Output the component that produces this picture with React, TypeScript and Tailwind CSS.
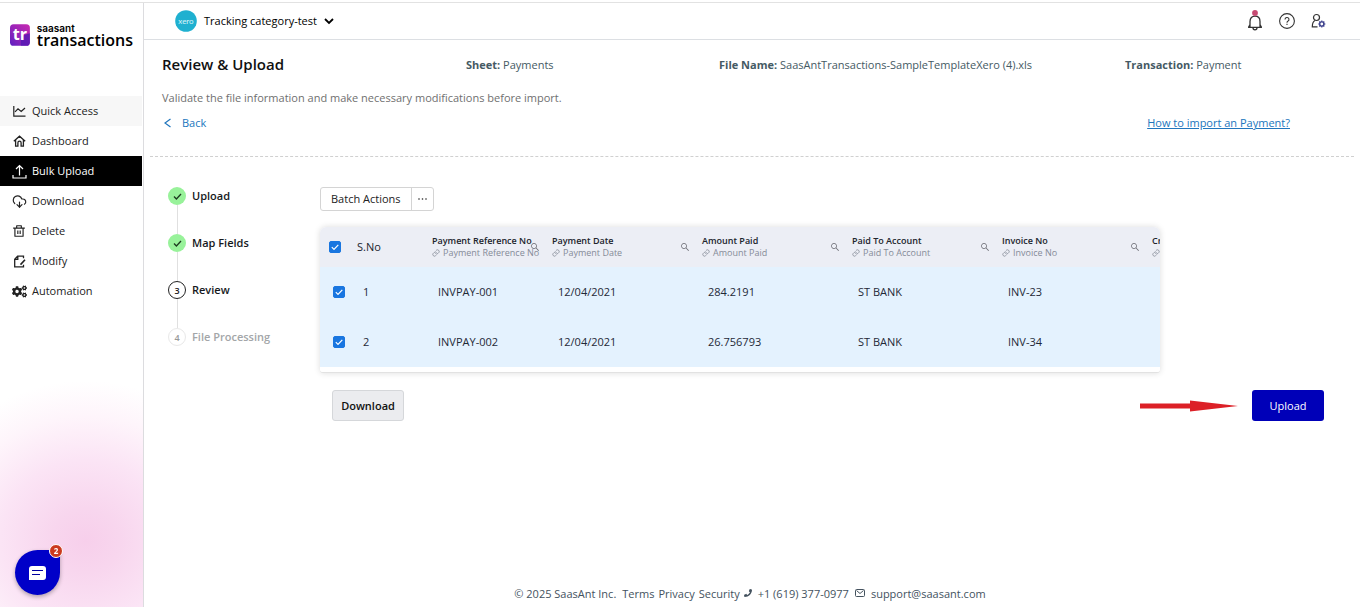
import { useState } from "react";
import type { ReactNode } from "react";
import { AiOutlineSearch } from "react-icons/ai";
import { RiDeleteBinLine } from "react-icons/ri";
import { FaCogs, FaPhone } from "react-icons/fa";
import { CloudDownload } from "lucide-react";

const nav: { label: string; icon: ReactNode; tone?: "soft" | "active" }[] = [
  { label: "Quick Access", icon: <ChartIcon />, tone: "soft" },
  { label: "Dashboard", icon: <HomeIcon /> },
  { label: "Bulk Upload", icon: <UploadIcon />, tone: "active" },
  { label: "Download", icon: <CloudDownload size={15} strokeWidth={1.9} /> },
  { label: "Delete", icon: <RiDeleteBinLine size={14} /> },
  { label: "Modify", icon: <ModifyIcon /> },
  { label: "Automation", icon: <FaCogs size={15} /> },
];

const columns = ["Payment Reference No", "Payment Date", "Amount Paid", "Paid To Account", "Invoice No"];

const rows = [
  ["INVPAY-001", "12/04/2021", "284.2191", "ST BANK", "INV-23"],
  ["INVPAY-002", "12/04/2021", "26.756793", "ST BANK", "INV-34"],
];

function ChartIcon() {
  return (
    <svg width="13" height="12" viewBox="0 0 13 12" fill="none" stroke="currentColor" strokeWidth="1.2">
      <path d="M.8 1v10.200H12.500" />
      <path d="M2 6.800 5 3.800l3.200 2.700L12 3" />
    </svg>
  );
}

function HomeIcon() {
  return (
    <svg width="13" height="12" viewBox="0 0 13 12" fill="none" stroke="currentColor" strokeWidth="1.3">
      <path d="M.8 6.300 6.500 1.200l5.700 5.100M2.600 5v6.200h2.300V7.800a1.600 1.600 0 0 1 3.200 0v3.400h2.300V5" />
    </svg>
  );
}

function UploadIcon() {
  return (
    <svg width="15" height="15" viewBox="0 0 15 15" fill="none" stroke="currentColor" strokeWidth="1.2">
      <path d="M7.5 11.500V1.500M4 5l3.500-3.500L11 5M1 11v3h13v-3" />
    </svg>
  );
}

function ModifyIcon() {
  return (
    <svg width="13" height="13" viewBox="0 0 13 13" fill="none" stroke="currentColor" strokeWidth="1.3">
      <path d="M10.500 3.200V1.200H4.600L1.700 4.200v7.600h8.800V9.800M4.800 1.200v3.200H1.700" />
      <path d="M12 4.800 7.500 9.600" strokeWidth="1.600" />
    </svg>
  );
}

function LinkIcon() {
  return (
    <svg width="8" height="8" viewBox="0 0 24 24" fill="none" stroke="currentColor" strokeWidth="2.500" className="shrink-0">
      <path d="M10 13a5 5 0 0 0 7.500.5l3-3a5 5 0 0 0-7-7l-1.700 1.700M14 11a5 5 0 0 0-7.500-.5l-3 3a5 5 0 0 0 7 7l1.700-1.700" />
    </svg>
  );
}

function Check({ checked, onChange, label }: { checked: boolean; onChange: () => void; label: string }) {
  return (
    <span className="grid size-3 place-items-center">
      <input
        type="checkbox"
        aria-label={label}
        checked={checked}
        onChange={onChange}
        className="peer col-start-1 row-start-1 size-3 appearance-none rounded-[2px] border border-gray-400 bg-white checked:border-[#1976e0] checked:bg-[#1976e0]"
      />
      <svg
        viewBox="0 0 12 12"
        className="pointer-events-none invisible col-start-1 row-start-1 size-3 peer-checked:visible"
        fill="none"
        stroke="white"
        strokeWidth="1.200"
      >
        <path d="M2.800 6.200 5 8.400 9.300 3.800" />
      </svg>
    </span>
  );
}

function Sidebar() {
  return (
    <aside className="flex w-36 shrink-0 flex-col border-r border-[#dcdcdf] bg-[radial-gradient(ellipse_170px_160px_at_86px_89%,#f7cfeb_0%,#f8d6ee_20%,#fbe4f5_50%,#fef5fb_78%,#ffffff_100%)]">
      <div className="flex items-center gap-1.5 px-[10px] pt-5">
        <svg width="23" height="24" viewBox="0 0 23 24" aria-hidden="true">
          <defs>
            <linearGradient id="mark" x1="0" y1="1" x2="1" y2="0">
              <stop offset="0" stopColor="#5a1fc0" />
              <stop offset="0.5" stopColor="#9a24b8" />
              <stop offset="1" stopColor="#c92bb0" />
            </linearGradient>
          </defs>
          <rect width="22" height="24" rx="4" fill="url(#mark)" />
          <path d="M12 24V13L22 10v10a4 4 0 0 1-4 4Z" fill="#4a17b4" opacity=".7" />
          <text x="3" y="18" fill="white" fontSize="18" fontWeight="700" fontFamily="Open Sans, sans-serif">
            tr
          </text>
        </svg>
        <div className="text-black">
          <div className="font-[Inter] text-[10px] leading-[10px] font-semibold">saasant</div>
          <div className="text-[16px] leading-[14px] font-semibold">transactions</div>
        </div>
      </div>
      <nav className="mt-[49px] flex flex-col">
        {nav.map((item) => (
          <a
            key={item.label}
            href="#"
            className={
              item.tone === "active"
                ? "mr-px flex h-[30px] items-center gap-[5px] bg-black pl-[11px] text-white"
                : item.tone === "soft"
                  ? "mr-px flex h-[30px] items-center gap-[5px] bg-[#f7f7f7] pl-[11px] text-[#222]"
                  : "mr-px flex h-[30px] items-center gap-[5px] pl-[11px] text-[#222]"
            }
          >
            <span className="flex w-4 justify-center">{item.icon}</span>
            {item.label}
          </a>
        ))}
      </nav>
    </aside>
  );
}

function Header() {
  return (
    <header className="flex h-[37px] items-center border-b border-[#dcdfe3] pr-[34px] pl-[31px]">
      <button type="button" className="flex items-center gap-[7px] text-black">
        <svg width="22" height="22" viewBox="0 0 22 22" aria-hidden="true">
          <circle cx="11" cy="11" r="10.800" fill="#1fb0d0" />
          <text x="11" y="13.500" textAnchor="middle" fill="#d8f3fa" fontSize="8" fontFamily="Lato, sans-serif">
            xero
          </text>
        </svg>
        Tracking category-test
        <svg width="10" height="7" viewBox="0 0 10 7" fill="none" stroke="currentColor" strokeWidth="1.800">
          <path d="M1 1l4 4 4-4" />
        </svg>
      </button>
      <div className="ml-auto flex items-center gap-4 text-[#333]">
        <button type="button" aria-label="Notifications">
          <svg width="16" height="22" viewBox="0 0 16 22" fill="none" stroke="currentColor" strokeWidth="1.300">
            <path d="M1 17.300h14M3 17V11.500C3 8 5 6.200 8 6.200s5 1.800 5 5.300V17M3 14.500 1.500 17.300M13 14.500l1.500 2.800M6 17.800a2 2 0 0 0 4 0" />
            <circle cx="8" cy="3" r="2.900" fill="#c64a72" stroke="none" />
          </svg>
        </button>
        <button type="button" aria-label="Help">
          <svg width="16" height="16" viewBox="0 0 16 16" fill="none" stroke="currentColor" strokeWidth="1.100">
            <circle cx="8" cy="8" r="7.400" />
            <path d="M6 6.500a2 2 0 1 1 2.800 1.800c-.6.3-.8.6-.8 1.400M8 10.800v1.200" />
          </svg>
        </button>
        <button type="button" aria-label="Account settings">
          <svg width="15" height="16" viewBox="0 0 15 16" fill="none" stroke="currentColor" strokeWidth="1.200">
            <circle cx="5.500" cy="4.500" r="3" />
            <path d="M4 7.500C2 8.500 1.300 10 1.300 13.800H6.500" />
            <circle cx="10.800" cy="11" r="2.100" stroke="#3b3f8c" strokeWidth="1.400" />
            <path
              d="M10.800 7.400v1.500M10.800 13.100v1.500M7.200 11h1.500M12.900 11h1.500M8.300 8.500l1 1M12.300 12.500l1 1M13.300 8.500l-1 1M9.300 12.500l-1 1"
              stroke="#3b3f8c"
            />
          </svg>
        </button>
      </div>
    </header>
  );
}

function Intro() {
  return (
    <section className="mx-1.5 border-b border-dashed border-[#d0d0d0] pt-3.5 pb-[25px] pl-3">
      <div className="grid grid-cols-[304fr_253fr_406fr_229fr] items-start leading-[22px] text-[#455a64]">
        <h1 className="text-[15px] leading-5 font-semibold text-[#111]">Review &amp; Upload</h1>
        <p><b>Sheet:</b> Payments</p>
        <p><b>File Name:</b> SaasAntTransactions-SampleTemplateXero (4).xls</p>
        <p><b>Transaction:</b> Payment</p>
      </div>
      <p className="mt-3.5 text-[#6f6f6f]">Validate the file information and make necessary modifications before import.</p>
      <div className="mt-[9px] flex items-center justify-between pr-16 text-[#2176bd]">
        <a href="#" className="flex items-center gap-2.5 pl-0.5">
          <svg width="8" height="10" viewBox="0 0 8 10" fill="none" stroke="currentColor" strokeWidth="1.200">
            <path d="M6.500 1 1 5l5.500 4" />
          </svg>
          Back
        </a>
        <a href="#" className="underline">How to import an Payment?</a>
      </div>
    </section>
  );
}

function Steps() {
  const steps = ["Upload", "Map Fields", "Review", "File Processing"];
  return (
    <ol className="w-[152px] shrink-0">
      {steps.map((step, i) => (
        <li key={step} className="flex h-[47px] gap-1.5">
          <div className="flex w-[18px] flex-col items-center">
            {i < 2 ? (
              <span className="grid size-[18px] shrink-0 place-items-center rounded-full bg-[#98f29a]">
                <svg width="9" height="7" viewBox="0 0 9 7" fill="none" stroke="#1d3a1f" strokeWidth="1.300">
                  <path d="M1 3.500 3.400 6 8 1" />
                </svg>
              </span>
            ) : (
              <span
                className={
                  i === 2
                    ? "grid size-[18px] shrink-0 place-items-center rounded-full border border-[#222] text-[9px] leading-none font-semibold text-[#222]"
                    : "grid size-[18px] shrink-0 place-items-center rounded-full border border-[#e8e8e8] text-[9px] leading-none font-semibold text-[#999]"
                }
              >
                {i + 1}
              </span>
            )}
            {i < 3 && <span className="w-px flex-1 bg-[#e0e0e0]" />}
          </div>
          <span className={i === 3 ? "leading-[18px] font-semibold text-[#a3a6a8]" : "leading-[18px] font-semibold text-[#16191c]"}>
            {step}
          </span>
        </li>
      ))}
    </ol>
  );
}

function ColumnHead({ name, searchable = true }: { name: string; searchable?: boolean }) {
  return (
    <th scope="col" className="relative px-2 text-left font-normal whitespace-nowrap">
      <div className="text-[9px] leading-3 font-semibold text-[#20242c]">{name}</div>
      <div className="flex items-center gap-[3px] text-[9px] leading-3 text-[#858b98]">
        <LinkIcon />
        {name}
      </div>
      {searchable && (
        <button type="button" aria-label={`Search ${name}`} className="absolute top-[15px] right-1 text-[#6c6c74]">
          <AiOutlineSearch size={10} />
        </button>
      )}
    </th>
  );
}

function ReviewTable() {
  const [selected, setSelected] = useState([true, true]);
  const all = selected.every(Boolean);
  return (
    <div className="overflow-hidden rounded-t-md rounded-b-[3px] border-b border-[#e2e2e2] bg-white pb-[5px] shadow-[0_0_6px_rgba(0,0,0,0.14)]">
      <table className="w-[974px] table-fixed border-collapse">
        <colgroup>
          <col className="w-[34px]" />
          <col className="w-[70px]" />
          <col className="w-[120px]" />
          <col className="w-[150px]" />
          <col className="w-[150px]" />
          <col className="w-[150px]" />
          <col className="w-[150px]" />
          <col className="w-[150px]" />
        </colgroup>
        <thead className="bg-[#eceef5]">
          <tr className="h-10">
            <th className="pl-[9px]">
              <Check label="Select all rows" checked={all} onChange={() => setSelected([!all, !all])} />
            </th>
            <th scope="col" className="pl-[3px] text-left font-medium text-[#20242c]">S.No</th>
            {columns.map((name) => (
              <ColumnHead key={name} name={name} />
            ))}
            <ColumnHead name="Credit Note" searchable={false} />
          </tr>
        </thead>
        <tbody className="bg-[#e4f2fe] text-[#1f2937]">
          {rows.map((cells, i) => (
            <tr key={cells[0]} className="h-[50px]">
              <td className="pl-[13px]">
                <Check
                  label={`Select row ${i + 1}`}
                  checked={selected[i]}
                  onChange={() => setSelected(selected.map((on, n) => (n === i ? !on : on)))}
                />
              </td>
              <td className="pl-[9px]">{i + 1}</td>
              {cells.map((cell) => (
                <td key={cell} className="pl-3.5">{cell}</td>
              ))}
              <td />
            </tr>
          ))}
        </tbody>
      </table>
    </div>
  );
}

function Footer() {
  return (
    <footer className="mt-auto flex items-center justify-center gap-1 pr-1 pb-[5px] text-[#44525e]">
      <span className="mr-0.5">© 2025 SaasAnt Inc.</span>
      <a href="#">Terms</a>
      <a href="#">Privacy</a>
      <a href="#">Security</a>
      <a href="tel:+16193770977" className="flex items-center gap-1.5">
        <FaPhone size={8} className="mb-0.5" />
        +1 (619) 377-0977
      </a>
      <a href="mailto:support@saasant.com" className="ml-0.5 flex items-center gap-1.5">
        <svg width="10" height="8" viewBox="0 0 10 8" fill="none" stroke="currentColor" strokeWidth="1" className="mb-0.5">
          <rect x=".5" y=".5" width="9" height="7" rx="1" />
          <path d="M1.500 1.500 5 4.500l3.500-3" />
        </svg>
        support@saasant.com
      </a>
    </footer>
  );
}

export default function App() {
  return (
    <div className="min-h-screen bg-white pt-[2px] font-['Open_Sans',sans-serif] text-[11px] leading-4">
      <div className="flex min-h-[calc(100vh-2px)] border-t border-[#e2e2e2]">
        <Sidebar />
        <div className="flex min-w-0 flex-1 flex-col">
          <Header />
          <Intro />
          <main className="pt-[30px]">
            <div className="flex items-start pr-[200px] pl-6">
              <Steps />
              <div className="min-w-0 flex-1">
                <div className="flex">
                  <div className="flex h-6 overflow-hidden rounded-[3px] border border-[#d4d4d4] text-[#222]">
                    <button type="button" className="px-2.5">Batch Actions</button>
                    <button type="button" aria-label="More actions" className="grid w-[22px] place-items-center border-l border-[#d4d4d4]">
                      <svg width="9" height="2" viewBox="0 0 9 2" fill="currentColor">
                        <circle cx="1" cy="1" r=".8" />
                        <circle cx="4.500" cy="1" r=".8" />
                        <circle cx="8" cy="1" r=".8" />
                      </svg>
                    </button>
                  </div>
                </div>
                <div className="mt-4">
                  <ReviewTable />
                </div>
              </div>
            </div>
            <div className="mt-[15px] flex items-center pr-9 pl-[188px]">
              <button type="button" className="h-[31px] w-[72px] rounded-[3px] border border-[#d5d7da] bg-[#ebecef] font-semibold text-[#111]">
                Download
              </button>
              <svg width="98" height="12" viewBox="0 0 98 12" className="mr-3.5 ml-auto" aria-hidden="true">
                <path d="M0 3.500h50V.5L98 6 50 11.500v-3H0Z" fill="#dc2027" />
              </svg>
              <button type="button" className="h-[31px] w-[72px] rounded-[3px] bg-[#0000b8] font-medium text-white">
                Upload
              </button>
            </div>
          </main>
          <Footer />
        </div>
      </div>
      <button
        type="button"
        aria-label="Open chat, 2 unread messages"
        className="fixed bottom-3 left-[15px] grid size-[45px] place-items-center rounded-full rounded-tr-[4px] bg-[#0000c8] shadow-[0_2px_4px_rgba(0,0,0,0.3)]"
      >
        <svg width="17" height="14" viewBox="0 0 17 14">
          <path d="M3 0h11a3 3 0 0 1 3 3v8a3 3 0 0 1-3 3H0V3a3 3 0 0 1 3-3Z" fill="white" />
          <path d="M3 4.500h11M3 8.500h8" stroke="#0000a0" strokeWidth="1.200" />
        </svg>
        <span className="absolute -top-[6px] -right-[3px] grid size-[14px] place-items-center rounded-full border border-white bg-[#cb3a1e] text-[8px] leading-none font-bold text-white">
          2
        </span>
      </button>
    </div>
  );
}
